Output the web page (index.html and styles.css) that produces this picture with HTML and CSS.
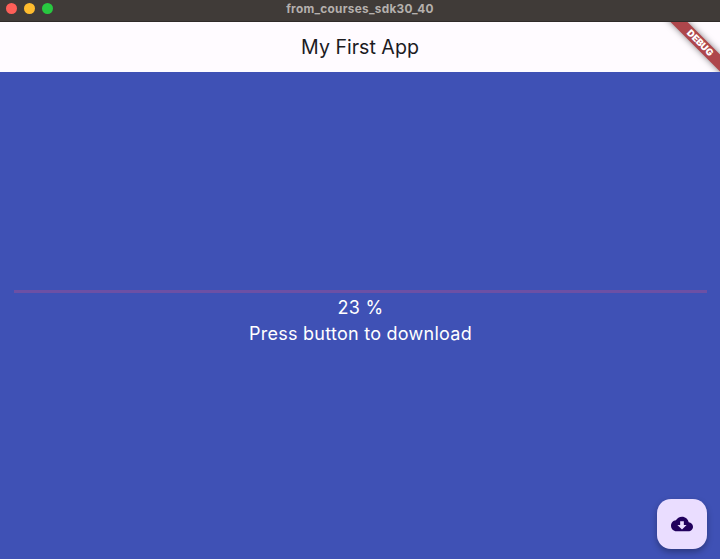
FILE: index.html
```html
<!DOCTYPE html>
<html lang="en">
<head>
<meta charset="utf-8">
<title>My First App</title>
<link rel="stylesheet" href="styles.css">
</head>
<body>
<div class="window">
  <div class="titlebar">
    <div class="lights"><span class="light close"></span><span class="light minimize"></span><span class="light zoom"></span></div>
    <div class="window-title">from_courses_sdk30_40</div>
  </div>
  <header class="appbar">
    <h1 class="app-title">My First App</h1>
    <div class="ribbon-clip"><div class="ribbon">DEBUG</div></div>
  </header>
  <main class="content">
    <div class="progress"></div>
    <p class="label">23 %</p>
    <p class="label message">Press button to download</p>
    <button class="fab" aria-label="Download">
      <svg class="fab-icon" viewBox="0 0 24 24"><path d="M19.35 10.04C18.67 6.59 15.64 4 12 4 9.11 4 6.6 5.64 5.35 8.04 2.34 8.36 0 10.91 0 14c0 3.31 2.69 6 6 6h13c2.76 0 5-2.24 5-5 0-2.64-2.05-4.78-4.65-4.96zM17 13l-5 5-5-5h3V9h4v4h3z"/></svg>
    </button>
  </main>
</div>
</body>
</html>
```
FILE: styles.css
```css
* { box-sizing: border-box; }
body { margin: 0; font-family: Inter, sans-serif; }
.window {
  width: 720px;
  height: 559px;
  display: flex;
  flex-direction: column;
  overflow: hidden;
}
.titlebar {
  height: 22px;
  flex: none;
  display: grid;
  grid-template-columns: 60px 1fr 60px;
  background: #403b38;
  border-bottom: 1px solid #302b29;
}
.lights { display: flex; gap: 7px; padding: 3.4px 0 0 6.3px; }
.light { width: 11px; height: 11px; border-radius: 50%; }
.close { background: #fe5f58; }
.minimize { background: #febc2e; }
.zoom { background: #28c840; }
.window-title {
  color: #b5b0ad;
  font-size: 11.8px;
  font-weight: 700;
  line-height: 18px;
  letter-spacing: 0.28px;
  text-align: center;
}
.appbar {
  height: 50px;
  flex: none;
  display: flex;
  align-items: center;
  justify-content: center;
  position: relative;
  background: #fffbff;
}
.app-title {
  margin: 0;
  color: #1c1b1f;
  font-size: 19.6px;
  font-weight: 400;
  line-height: 26px;
}
.ribbon-clip {
  position: absolute;
  top: 0;
  right: 0;
  width: 70px;
  height: 50px;
  overflow: hidden;
}
.ribbon {
  position: absolute;
  top: 15px;
  left: 0;
  width: 100px;
  height: 12px;
  transform: rotate(45deg);
  background: #ae464b;
  box-shadow: 0 0 6px rgba(0, 0, 0, 0.5);
  color: #fff;
  font-size: 9.4px;
  font-weight: 900;
  line-height: 12px;
  text-align: center;
}
.content {
  flex: 1;
  position: relative;
  padding: 218px 13px 0 14px;
  background: #3f51b5;
  color: #fff;
  text-align: center;
}
.progress { height: 3px; background: #6c50a5; }
.label {
  margin: 2px 0 0;
  font-size: 18px;
  line-height: 26px;
  letter-spacing: 0.26px;
}
.message { margin-top: 0; }
.fab {
  position: absolute;
  right: 13px;
  bottom: 10px;
  width: 50px;
  height: 50px;
  padding: 0;
  display: flex;
  align-items: center;
  justify-content: center;
  border: 0;
  border-radius: 14px;
  background: #eaddff;
  box-shadow: 0 3px 6px rgba(0, 0, 0, 0.3);
}
.fab-icon { width: 22px; height: 22px; fill: #21005d; }
```
